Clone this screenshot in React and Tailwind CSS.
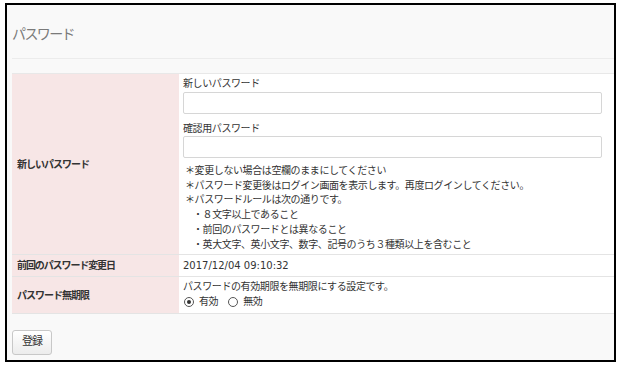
import React from "react";

const jp = { fontFamily: '"DejaVu Sans", "Noto Sans CJK JP", sans-serif' };

function Radio({ checked, label }) {
  return (
    <span className="inline-flex items-center gap-[5px]">
      <span className="flex h-[10px] w-[10px] items-center justify-center rounded-full border border-[#555] bg-white">
        {checked && <span className="h-[4px] w-[4px] rounded-full bg-[#333]" />}
      </span>
      <span>{label}</span>
    </span>
  );
}

export default function App() {
  const notes = [
    "＊変更しない場合は空欄のままにしてください",
    "＊パスワード変更後はログイン画面を表示します。再度ログインしてください。",
    "＊パスワードルールは次の通りです。",
  ];
  const rules = [
    "・８文字以上であること",
    "・前回のパスワードとは異なること",
    "・英大文字、英小文字、数字、記号のうち３種類以上を含むこと",
  ];

  return (
    <div className="h-[366px] w-[618px] bg-white pl-[5px] pt-[3px]" style={jp}>
      <div className="h-[359px] w-[611px] overflow-hidden border-2 border-black bg-[#f9f9f9] pl-[5px] text-[#333]">
        <div className="border-b border-[#ececec] pb-[14px] pt-[19px]">
          <h1 className="text-[14px] leading-[20px] tracking-[-1.6px] text-[#7a7a7a]">パスワード</h1>
        </div>

        <div className="mt-[14px] w-[620px] border-t border-[#e8e8e8] text-[10px] tracking-[-0.4px]">
          {/* 新しいパスワード */}
          <div className="flex border-b border-[#e4e4e4]">
            <div className="flex w-[167px] items-center bg-[#f7e6e6] pl-[5px] font-bold tracking-[-1px]">
              新しいパスワード
            </div>
            <div className="flex-1 bg-white pb-[2px] pl-[4px] pr-[23px] pt-[2px]">
              <div className="leading-[16px]">新しいパスワード</div>
              <input type="password" className="block h-[22px] w-[419px] rounded-[2px] border border-[#d6d6d6] bg-white" />
              <div className="mt-[7px] leading-[15px]">確認用パスワード</div>
              <input type="password" className="block h-[22px] w-[419px] rounded-[2px] border border-[#d6d6d6] bg-white" />
              <div className="mt-[6px] pl-[2px] leading-[14.7px]">
                {notes.map((n) => (
                  <div key={n}>{n}</div>
                ))}
                {rules.map((r) => (
                  <div key={r} className="pl-[8px]">{r}</div>
                ))}
              </div>
            </div>
          </div>

          {/* 前回のパスワード変更日 */}
          <div className="flex h-[22px] border-b border-[#e4e4e4]">
            <div className="flex w-[167px] items-center bg-[#f7e6e6] pl-[5px] font-bold tracking-[-1.1px]">
              前回のパスワード変更日
            </div>
            <div className="flex flex-1 items-center bg-white pl-[4px] tracking-normal">2017/12/04 09:10:32</div>
          </div>

          {/* パスワード無期限 */}
          <div className="flex h-[37px] border-b border-[#e4e4e4]">
            <div className="flex w-[167px] items-center bg-[#f7e6e6] pl-[5px] font-bold tracking-[-1px]">
              パスワード無期限
            </div>
            <div className="flex-1 bg-white pl-[4px] pt-[2px] leading-[15px]">
              <div>パスワードの有効期限を無期限にする設定です。</div>
              <div className="flex items-center gap-[10px] pl-[1px]">
                <Radio checked label="有効" />
                <Radio label="無効" />
              </div>
            </div>
          </div>
        </div>

        <div className="mt-[14px]">
          <button className="h-[25px] w-[40px] rounded-[3px] border border-[#c8c8c8] bg-gradient-to-b from-white to-[#ececec] text-[11px] tracking-[-1px] text-[#333]">
            登録
          </button>
        </div>
      </div>
    </div>
  );
}
